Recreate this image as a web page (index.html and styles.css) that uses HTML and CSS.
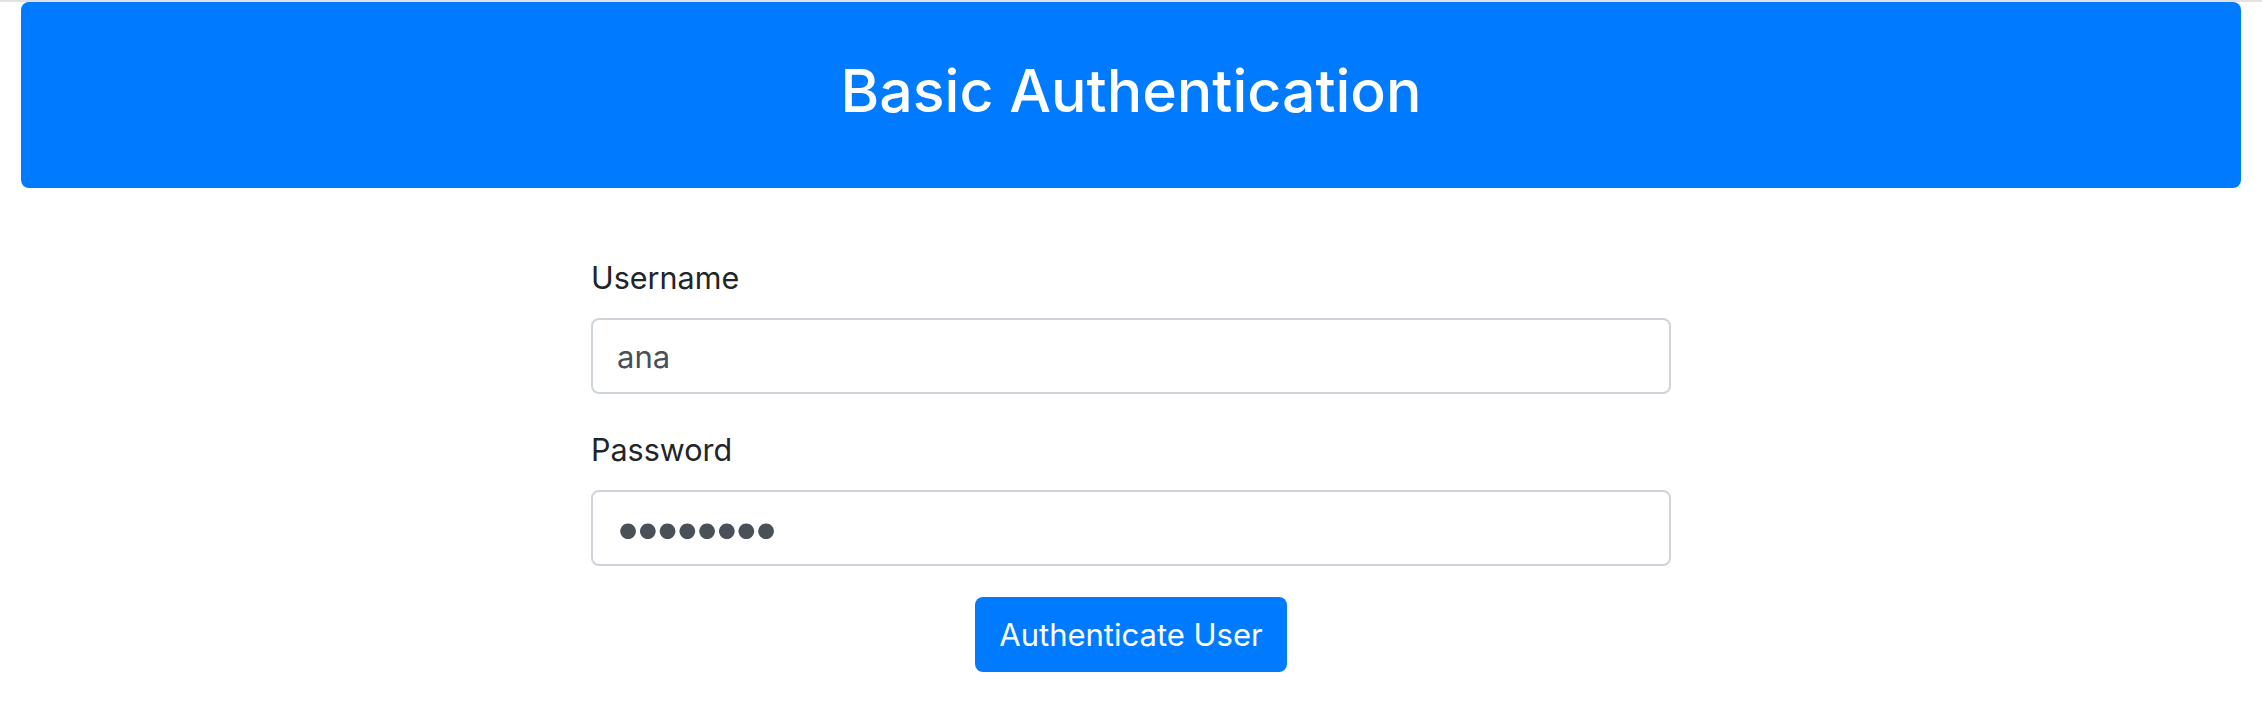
FILE: index.html
```html
<!DOCTYPE html>
<html lang="en">
<head>
<meta charset="utf-8">
<title>Basic Authentication</title>
<link rel="stylesheet" href="styles.css">
</head>
<body>
<div class="page">
  <header class="hero">
    <h1 class="hero-title">Basic Authentication</h1>
  </header>
  <form class="auth-form">
    <div class="form-group">
      <label class="form-label" for="username">Username</label>
      <input class="form-control" id="username" type="text" value="ana">
    </div>
    <div class="form-group">
      <label class="form-label" for="password">Password</label>
      <input class="form-control form-control-secret" id="password" type="password" value="password">
    </div>
    <div class="actions">
      <button class="btn-primary" type="button">Authenticate User</button>
    </div>
  </form>
</div>
</body>
</html>
```

FILE: styles.css
```css
* { box-sizing: border-box; }
html, body { margin: 0; padding: 0; background: #fff; }
body {
  font-family: Inter, "Noto Sans", "Liberation Sans", sans-serif;
  color: #212529;
  border-top: 2px solid #e2e2e2;
}
.page {
  padding: 0 21px;
}
.hero {
  background: #007bff;
  border-radius: 8px;
  height: 186px;
  display: flex;
  align-items: center;
  justify-content: center;
  margin-bottom: 66px;
}
.hero-title {
  margin: 0;
  color: #fff;
  font-weight: 500;
  font-size: 59px;
  line-height: 1.2;
  padding-bottom: 8px;
}
.auth-form {
  width: 1080px;
  margin: 0 auto;
}
.form-group {
  margin-bottom: 32px;
  display: flex;
  flex-direction: column;
}
.form-label {
  font-size: 30.5px;
  line-height: 48px;
  margin-bottom: 16px;
}
.form-control {
  font-family: inherit;
  height: 76px;
  font-size: 31px;
  padding: 12px 24px;
  color: #495057;
  border: 2px solid #ced4da;
  border-radius: 8px;
  background: #fff;
  outline: none;
}
.form-control-secret {
  font-size: 50px;
  letter-spacing: -8.4px;
  padding: 0 24px 0 21px;
}
.actions {
  display: flex;
  justify-content: center;
  margin-top: -1px;
}
.btn-primary {
  font-family: inherit;
  background: #007bff;
  color: #fff;
  border: none;
  border-radius: 8px;
  font-size: 31px;
  line-height: 51px;
  padding: 12px 24px;
}
```
